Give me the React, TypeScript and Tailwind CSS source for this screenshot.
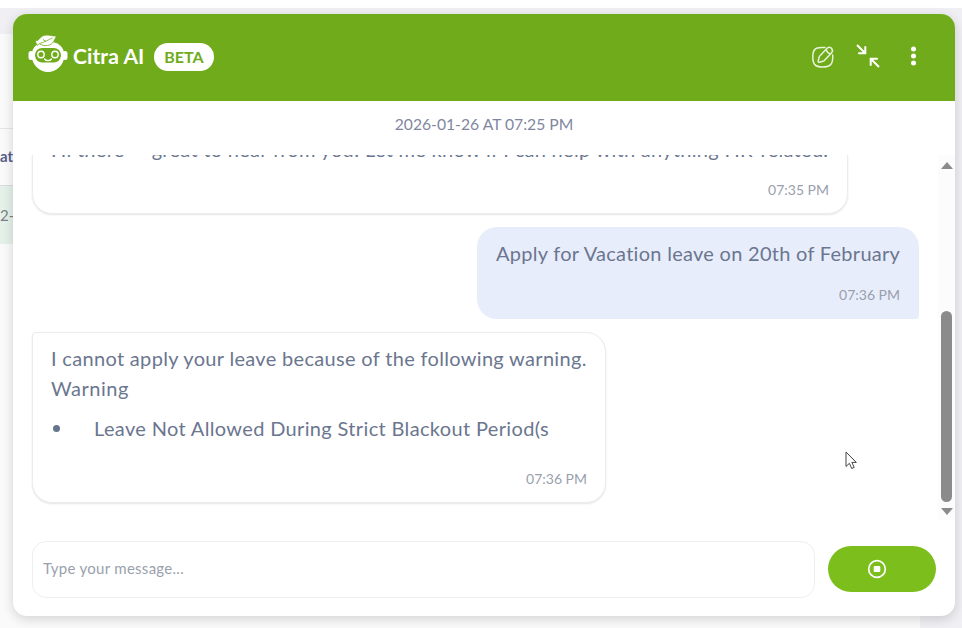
import React from 'react';

interface BubbleProps {
  time: string;
  className: string;
  children: React.ReactNode;
}

const BotLogo: React.FC = () => (
  <svg className="h-[40px] w-[40px] shrink-0" viewBox="0 0 40 40" fill="none">
    <rect x="0.5" y="17" width="5" height="9" rx="2.5" fill="#fff" />
    <rect x="34.5" y="17" width="5" height="9" rx="2.5" fill="#fff" />
    <path d="M20 7.500c9.500 0 16.300 5 16.300 14 0 9-8 16.500-16.300 16.500S3.700 30.500 3.700 21.500C3.700 12.500 10.500 7.500 20 7.500z" fill="#fff" />
    <rect x="7" y="14" width="26" height="14.500" rx="7.200" fill="#70ab1b" />
    <circle cx="13" cy="20.500" r="3.200" stroke="#fff" strokeWidth="1.400" />
    <circle cx="27" cy="20.500" r="3.200" stroke="#fff" strokeWidth="1.400" />
    <path d="M16.500 25c1.800 2.200 5.200 2.200 7 0" stroke="#fff" strokeWidth="1.300" strokeLinecap="round" />
    <path d="M7 6.500C12 8 11 1 19 1c3.500 0 6 1.300 9.500 1-2 3-2.500 8.500-9 9.500-3.500.500-6-.500-8-1.700-1.200.500-1.700 1-2.500 1.700z" fill="#fff" stroke="#70ab1b" strokeWidth="0.800" />
    <path d="M11.500 9.500C16 8.500 20 6 24.500 3.800M15 5.500l3 2" stroke="#70ab1b" strokeWidth="0.800" />
  </svg>
);

const EditIcon: React.FC = () => (
  <svg className="h-6 w-6" viewBox="0 0 24 24" fill="none" stroke="#e8f3d8" strokeWidth="1.500" strokeLinecap="round" strokeLinejoin="round">
    <path d="M14 2.500H10.500C4 2.500 1.800 5 1.800 12s2.200 10 9.700 10 10.200-2.500 10.200-9.500V10" />
    <path d="M16.200 3.200 9 10.800c-.400.400-.700.900-.900 1.500L7.200 16c-.200.900.400 1.500 1.300 1.300l3.400-1c.500-.100 1-.400 1.400-.800l7.200-7.600c2.800-3-1.400-7.500-4.300-4.700z" />
    <path d="M15 4.500c.6 2 2 3.500 4 4.200" />
  </svg>
);

const CollapseIcon: React.FC = () => (
  <svg className="h-6 w-6" viewBox="0 0 24 24" fill="none" stroke="#fff" strokeWidth="2" strokeLinejoin="miter">
    <path d="M1 1l8 8M9.300 2.200v7.100H2.200" />
    <path d="M23 23l-8-8M14.700 21.800v-7.100h7.100" />
  </svg>
);

const DotsIcon: React.FC = () => (
  <svg className="h-5 w-5" viewBox="0 0 20 20" fill="#fff">
    <circle cx="10.500" cy="3" r="2.500" />
    <circle cx="10.500" cy="10" r="2.500" />
    <circle cx="10.500" cy="17" r="2.500" />
  </svg>
);

const StopIcon: React.FC = () => (
  <svg className="h-5 w-5" viewBox="0 0 20 20" fill="none">
    <circle cx="10" cy="10" r="8.300" stroke="#fff" strokeWidth="1.700" />
    <rect x="6.700" y="7" width="6.600" height="6" rx="1" fill="#fff" />
  </svg>
);

const Pointer: React.FC = () => (
  <svg className="absolute left-[832px] top-[437px] h-5 w-3" viewBox="0 0 12 20">
    <path d="M1 1v14.500l3.400-3.200 2.300 5.200 2.500-1.100-2.300-5H11.300z" fill="#fff" stroke="#444" strokeWidth="1" />
  </svg>
);

const Bubble: React.FC<BubbleProps> = ({ time, className, children }) => (
  <div className={`flex shrink-0 flex-col justify-between ${className}`}>
    <div className="whitespace-nowrap text-[20px] leading-[30px] text-[#6b768f]">{children}</div>
    <div className="text-right text-[14px] leading-[21px] text-[#9a9fac]">{time}</div>
  </div>
);

const App: React.FC = () => {
  return (
    <div className="relative h-[628px] w-[962px] overflow-hidden bg-[#fafafb] font-['Lato','Noto_Sans',sans-serif]">
      {/* Page behind the chat window */}
      <div className="flex h-full flex-col">
        <div className="h-2 bg-white" />
        <div className="h-[26px] bg-[#f0f0f4]" />
        <div className="flex flex-1 justify-between">
          <div className="flex w-[13px] flex-col overflow-hidden whitespace-nowrap">
            <div className="h-[95px] border-b border-[#e6e6ea]" />
            <div className="h-[57px] border-b border-[#d9dbe0] pt-[17px] text-[15px] leading-5 font-bold text-[#56608a]">at</div>
            <div className="h-[58px] bg-[#e4f1e9] pt-[19px] text-[15px] leading-5 text-[#7b8088]">2-</div>
          </div>
          <div className="w-[42px] bg-[#f0f0f4]" />
        </div>
      </div>

      {/* Chat window */}
      <div className="absolute left-[13px] top-[14px] flex h-[602px] w-[942px] flex-col overflow-hidden rounded-[14px] bg-white shadow-[0_3px_12px_rgba(0,0,0,0.16)]">
        <header className="flex h-[87px] shrink-0 items-center bg-[#70ab1b] pb-[2px] pl-[15px] pr-[32px]">
          <div className="pb-[5px]">
            <BotLogo />
          </div>
          <h1 className="ml-[5px] w-[72px] whitespace-nowrap pb-[2px] text-[21px] font-bold tracking-[0.1px] text-white">Citra AI</h1>
          <span className="ml-[9px] flex h-[28px] w-[60px] items-center justify-center rounded-full bg-white text-[16px] font-bold text-[#70ab1b]">BETA</span>
          <div className="ml-auto flex items-center">
            <EditIcon />
            <div className="ml-[21px] pb-[2px]">
              <CollapseIcon />
            </div>
            <div className="ml-[23px] pb-[2px]">
              <DotsIcon />
            </div>
          </div>
        </header>

        <div className="flex h-[54px] shrink-0 items-center justify-center pb-[7px] text-[15.7px] text-[#7f87a0]">
          <span>2026-01-26 AT 07:25 PM</span>
        </div>

        <div className="flex h-[365px] shrink-0 overflow-hidden">
          <div className="flex flex-1 flex-col justify-end gap-[13px] overflow-hidden pb-[17px] pl-[19px] pr-[19px]">
            <Bubble time="07:35 PM" className="h-[92px] w-[816px] rounded-[20px] rounded-tl-[4px] border border-[#ececef] bg-white pb-[13px] pl-[18px] pr-[18px] pt-[11px] shadow-[0_1px_2px_rgba(0,0,0,0.1)]">
              <span className="tracking-[0.29px]">Hi there — great to hear from you! Let me know if I can help with anything HR-related.</span>
            </Bubble>
            <Bubble time="07:36 PM" className="h-[92px] w-[442px] self-end rounded-[20px] rounded-br-[3px] bg-[#e8edfc] px-[19px] pb-[14px] pt-[11px]">
              <span className="tracking-[0.28px]">Apply for Vacation leave on 20th of February</span>
            </Bubble>
            <Bubble time="07:36 PM" className="h-[171px] w-[574px] rounded-[20px] rounded-tl-[4px] border border-[#ececef] bg-white pb-[13px] pl-[18px] pr-[18px] pt-[10px] shadow-[0_1px_2px_rgba(0,0,0,0.1)]">
              <p className="tracking-[0.32px]">I cannot apply your leave because of the following warning.</p>
              <p className="tracking-[0.5px]">Warning</p>
              <ul className="mt-[10px]">
                <li className="flex items-center">
                  <span className="ml-[2px] h-[7px] w-[7px] rounded-full bg-[#67748e]" />
                  <span className="ml-[34px] tracking-[0.35px]">Leave Not Allowed During Strict Blackout Period(s</span>
                </li>
              </ul>
            </Bubble>
          </div>
          {/* Scrollbar */}
          <div className="flex w-[17px] flex-col items-center bg-[#fcfcfc] pt-[7px]">
            <svg className="h-[7px] w-3" viewBox="0 0 12 7" fill="#8b8b8b">
              <path d="M6 0l6 7H0z" />
            </svg>
            <div className="mt-[142px] h-[191px] w-[11px] rounded-full bg-[#8b8b8b]" />
            <svg className="mt-[6px] h-[7px] w-3" viewBox="0 0 12 7" fill="#8b8b8b">
              <path d="M0 0h12L6 7z" />
            </svg>
          </div>
        </div>

        <div className="flex flex-1 items-start gap-[13px] pl-[19px] pr-[19px] pt-[21px]">
          <input
            type="text"
            placeholder="Type your message..."
            className="h-[57px] w-[783px] rounded-[14px] border border-[#eeeef1] bg-white pb-[3px] pl-[10px] text-[15px] tracking-[0.28px] placeholder:text-[#9a9fac]"
          />
          <button className="mt-[5px] flex h-[46px] w-[108px] items-center justify-center rounded-full bg-[#7cbf1c] pb-px pr-[11px]">
            <StopIcon />
          </button>
        </div>

        <Pointer />
      </div>
    </div>
  );
};

export default App;
